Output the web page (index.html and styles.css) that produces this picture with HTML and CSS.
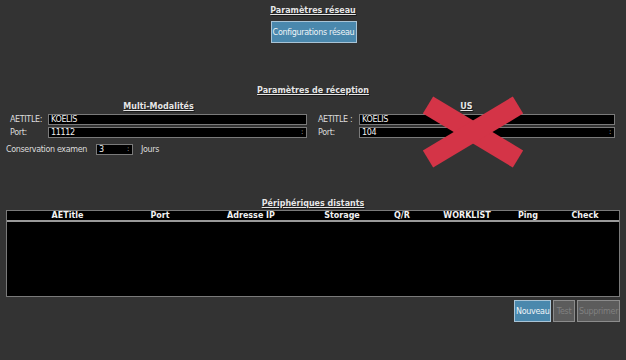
FILE: index.html
```html
<!DOCTYPE html>
<html lang="fr">

<head>
  <meta charset="UTF-8">
  <meta name="viewport" content="width=device-width, initial-scale=1.0">
  <title>Paramètres</title>
  <link rel="stylesheet" href="styles.css">
</head>

<body>
  <div class="page">
    <section class="network">
      <h2 class="title">Paramètres réseau</h2>
      <button class="btn btn-primary config-btn">Configurations réseau</button>
    </section>

    <section class="reception">
      <h2 class="title">Paramètres de réception</h2>
      <div class="columns">
        <div class="col col-left">
          <h3 class="title">Multi-Modalités</h3>
          <div class="field">
            <label>AETITLE:</label>
            <div class="input">KOELIS</div>
          </div>
          <div class="field">
            <label>Port:</label>
            <div class="input spin">11112<span class="arrows">:</span></div>
          </div>
        </div>
        <div class="col col-right">
          <h3 class="title">US</h3>
          <div class="field">
            <label>AETITLE :</label>
            <div class="input">KOELIS</div>
          </div>
          <div class="field">
            <label>Port:</label>
            <div class="input spin">104<span class="arrows">:</span></div>
          </div>
        </div>
      </div>
      <div class="keep-row">
        <span>Conservation examen</span>
        <div class="input spin keep-input">3<span class="arrows">:</span></div>
        <span>Jours</span>
      </div>
    </section>

    <section class="remote">
      <h2 class="title">Périphériques distants</h2>
      <div class="table">
        <div class="thead">
          <span>AETitle</span>
          <span>Port</span>
          <span>Adresse IP</span>
          <span>Storage</span>
          <span>Q/R</span>
          <span>WORKLIST</span>
          <span>Ping</span>
          <span>Check</span>
        </div>
        <div class="tbody"></div>
      </div>
      <div class="actions">
        <button class="btn btn-primary">Nouveau</button>
        <button class="btn" disabled>Test</button>
        <button class="btn" disabled>Supprimer</button>
      </div>
    </section>

    <svg class="cross" width="110" height="76" viewBox="0 0 110 76">
      <line x1="10" y1="11" x2="100" y2="65" />
      <line x1="100" y1="11" x2="10" y2="65" />
    </svg>
  </div>
</body>

</html>
```

FILE: styles.css
```css
:root {
  --bg: #333333;
  --text: #dcdcdc;
  --field-border: #7a7a7a;
  --blue: #4a88ad;
  --blue-border: #a9c4d6;
  --grey-btn: #5c5c5c;
  --grey-border: #8c8c8c;
  --cross: #d43447;
}

* {
  margin: 0;
  padding: 0;
  box-sizing: border-box;
  font-family: 'DejaVu Sans', Verdana, sans-serif;
}

body {
  background-color: var(--bg);
  color: var(--text);
  font-size: 8px;
  line-height: 11px;
  letter-spacing: -0.35px;
}

.page {
  position: relative;
  width: 626px;
  height: 360px;
  padding-top: 5px;
}

.title {
  font-size: 8px;
  font-weight: bold;
  line-height: 11px;
  letter-spacing: 0;
  text-align: center;
  text-decoration: underline;
  color: #e6e6e6;
  text-shadow: 1px 1px 0 #1a1a1a;
}

/* network */
.network {
  display: flex;
  flex-direction: column;
  align-items: center;
  gap: 5px;
}

.btn {
  height: 22px;
  padding: 0 1px;
  font-size: 8px;
  letter-spacing: -0.3px;
  color: #808080;
  background-color: var(--grey-btn);
  border: 1px solid var(--grey-border);
  font-family: 'DejaVu Sans', Verdana, sans-serif;
}

.btn-primary {
  color: #eef4f8;
  background-color: var(--blue);
  border-color: var(--blue-border);
}

.config-btn {
  width: 86px;
  margin-left: 1px;
}

/* reception */
.reception {
  margin-top: 42px;
}

.columns {
  display: flex;
  margin-top: 5px;
}

.col {
  display: flex;
  flex-direction: column;
  gap: 2px;
}

.col-left {
  margin-left: 10px;
  width: 297px;
}

.col-right {
  margin-left: 11px;
  width: 297px;
}

.field {
  display: flex;
  align-items: center;
  height: 11px;
}

.col-left label {
  width: 38px;
}

.col-right label {
  width: 41px;
}

.input {
  position: relative;
  flex: 1;
  height: 11px;
  line-height: 9px;
  padding-left: 2px;
  background-color: #000;
  border: 1px solid var(--field-border);
  color: #f0f0f0;
}

.arrows {
  position: absolute;
  right: 3px;
  top: 0;
  font-size: 7px;
  line-height: 8px;
  color: #cfcfcf;
}

.keep-row {
  display: flex;
  align-items: center;
  margin-top: 6px;
  margin-left: 6px;
  height: 11px;
}

.keep-input {
  flex: none;
  width: 37px;
  margin-left: 9px;
  margin-right: 8px;
}

/* remote devices */
.remote {
  margin-top: 43px;
}

.table {
  margin: 1px 6px 0;
  height: 87px;
  border: 1px solid var(--field-border);
  background-color: #000;
  display: flex;
  flex-direction: column;
}

.thead {
  display: grid;
  grid-template-columns: 121px 64px 118px 64px 56px 74px 48px 66px;
  height: 11px;
  border-bottom: 2px solid #9a9a9a;
  font-weight: bold;
  letter-spacing: 0;
  color: #f2f2f2;
  line-height: 10px;
}

.thead span {
  text-align: center;
}

.tbody {
  flex: 1;
}

.actions {
  display: flex;
  justify-content: flex-end;
  gap: 2px;
  margin: 3px 6px 0 0;
}

.actions .btn:nth-child(1) {
  width: 37px;
}

.actions .btn:nth-child(2) {
  width: 22px;
}

.actions .btn:nth-child(3) {
  width: 43px;
}

.cross {
  position: absolute;
  left: 418px;
  top: 94px;
}

.cross line {
  stroke: var(--cross);
  stroke-width: 20;
}
```
